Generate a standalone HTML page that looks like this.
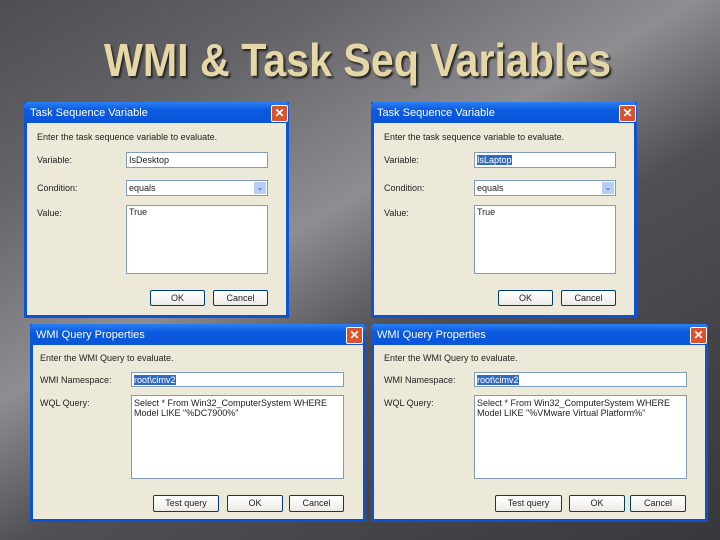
<!DOCTYPE html><html><head><style>
body{margin:0;width:720px;height:540px;overflow:hidden;position:relative;font-family:"Liberation Sans",sans-serif;
background:linear-gradient(150deg,#4e4e52 0%,#646468 20%,#8e8e92 42%,#505054 58%,#38383c 100%);}
h1{position:absolute;left:104px;top:33px;margin:0;font-size:46px;font-weight:bold;color:#e6d7a6;text-shadow:2px 2px 2px #222;white-space:nowrap;transform:scaleX(0.895);transform-origin:left top}
.d{position:absolute;background:#ece9d8;border:3px solid #0a52d6;border-top:0;box-sizing:border-box;font-size:9px;color:#222}
.tb{position:absolute;left:-3px;right:-3px;top:0;height:21px;background:linear-gradient(#2b80f4,#0a5ae0 40%,#0b55d8);color:#fff;font-size:11px;line-height:22px;padding-left:6px;border-radius:4px 4px 0 0}
.x{position:absolute;top:3px;width:15px;height:15px;background:#d9542e;border:1px solid #fff;border-radius:2px;color:#fff;font-size:12px;line-height:15px;text-align:center;font-weight:bold}
.a{position:absolute;white-space:nowrap}
.i{position:absolute;background:#fff;border:1px solid #7f9db9;box-sizing:border-box;padding-left:2px;line-height:14px;white-space:nowrap}
.b{position:absolute;height:16px;background:linear-gradient(#fff,#ecebe6);border:1px solid #003c74;border-radius:2px;box-sizing:border-box;text-align:center;line-height:14px}
.h{background:#316ac5;color:#fff}
.dd{position:absolute;right:1px;top:1px;width:12px;height:12px;background:#b6cdf5;border-radius:1px;color:#34a;font-size:8px;line-height:12px;text-align:center}
</style></head><body>
<h1>WMI &amp; Task Seq Variables</h1>

<div class="d" style="left:24px;top:102px;width:265px;height:216px">
<div class="tb">Task Sequence Variable</div><div class="x" style="left:244px">✕</div>
<div class="a" style="left:10px;top:30px">Enter the task sequence variable to evaluate.</div>
<div class="a" style="left:10px;top:53px">Variable:</div>
<div class="i" style="left:99px;top:50px;width:142px;height:16px">IsDesktop</div>
<div class="a" style="left:10px;top:81px">Condition:</div>
<div class="i" style="left:99px;top:78px;width:142px;height:16px">equals<div class="dd">⌄</div></div>
<div class="a" style="left:10px;top:106px">Value:</div>
<div class="i" style="left:99px;top:103px;width:142px;height:69px;line-height:12px">True</div>
<div class="b" style="left:123px;top:188px;width:55px">OK</div>
<div class="b" style="left:186px;top:188px;width:55px">Cancel</div>
</div>

<div class="d" style="left:371px;top:102px;width:266px;height:216px">
<div class="tb">Task Sequence Variable</div><div class="x" style="left:245px">✕</div>
<div class="a" style="left:10px;top:30px">Enter the task sequence variable to evaluate.</div>
<div class="a" style="left:10px;top:53px">Variable:</div>
<div class="i" style="left:100px;top:50px;width:142px;height:16px"><span class="h">IsLaptop</span></div>
<div class="a" style="left:10px;top:81px">Condition:</div>
<div class="i" style="left:100px;top:78px;width:142px;height:16px">equals<div class="dd">⌄</div></div>
<div class="a" style="left:10px;top:106px">Value:</div>
<div class="i" style="left:100px;top:103px;width:142px;height:69px;line-height:12px">True</div>
<div class="b" style="left:124px;top:188px;width:55px">OK</div>
<div class="b" style="left:187px;top:188px;width:55px">Cancel</div>
</div>

<div class="d" style="left:30px;top:324px;width:336px;height:198px">
<div class="tb">WMI Query Properties</div><div class="x" style="left:313px">✕</div>
<div class="a" style="left:7px;top:29px">Enter the WMI Query to evaluate.</div>
<div class="a" style="left:7px;top:51px">WMI Namespace:</div>
<div class="i" style="left:98px;top:48px;width:213px;height:15px"><span class="h">root\cimv2</span></div>
<div class="a" style="left:7px;top:74px">WQL Query:</div>
<div class="i" style="left:98px;top:71px;width:213px;height:84px;line-height:10px;white-space:normal;padding-top:2px">Select * From Win32_ComputerSystem WHERE Model LIKE "%DC7900%"</div>
<div class="b" style="left:120px;top:171px;width:66px;height:17px">Test query</div>
<div class="b" style="left:194px;top:171px;width:56px;height:17px">OK</div>
<div class="b" style="left:256px;top:171px;width:55px;height:17px">Cancel</div>
</div>

<div class="d" style="left:371px;top:324px;width:337px;height:198px">
<div class="tb">WMI Query Properties</div><div class="x" style="left:316px">✕</div>
<div class="a" style="left:10px;top:29px">Enter the WMI Query to evaluate.</div>
<div class="a" style="left:10px;top:51px">WMI Namespace:</div>
<div class="i" style="left:100px;top:48px;width:213px;height:15px"><span class="h">root\cimv2</span></div>
<div class="a" style="left:10px;top:74px">WQL Query:</div>
<div class="i" style="left:100px;top:71px;width:213px;height:84px;line-height:10px;white-space:normal;padding-top:2px;padding-right:14px">Select * From Win32_ComputerSystem WHERE Model LIKE "%VMware Virtual Platform%"</div>
<div class="b" style="left:121px;top:171px;width:67px;height:17px">Test query</div>
<div class="b" style="left:195px;top:171px;width:56px;height:17px">OK</div>
<div class="b" style="left:256px;top:171px;width:56px;height:17px">Cancel</div>
</div>
</body></html>
